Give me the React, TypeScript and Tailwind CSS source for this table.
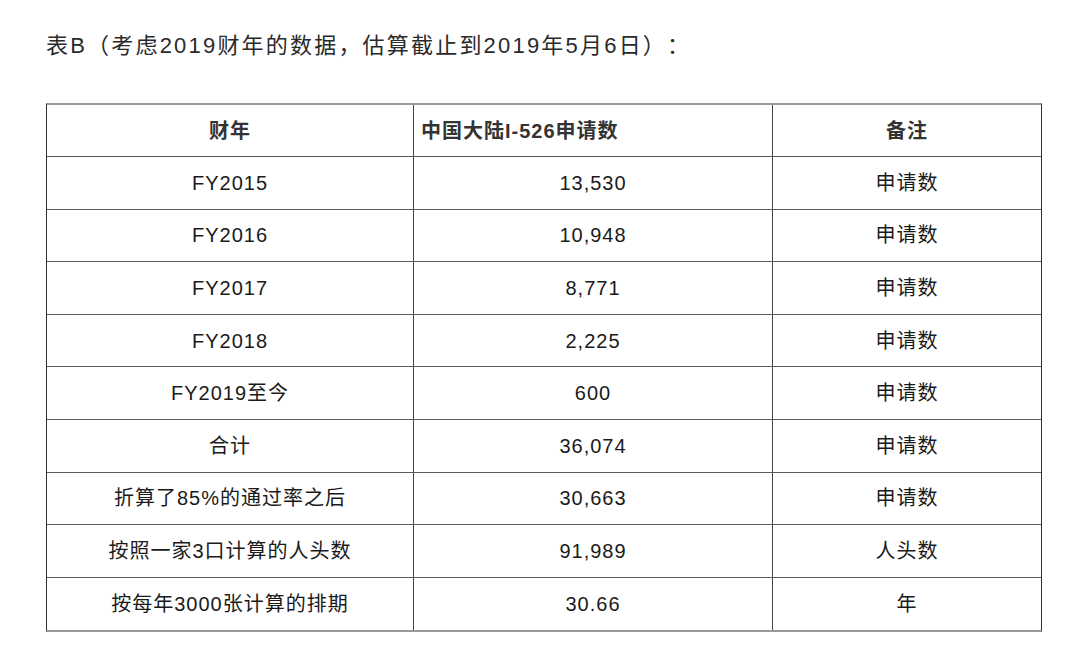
import React from "react";

const rows: [string, string, string][] = [
  ["FY2015", "13,530", "申请数"],
  ["FY2016", "10,948", "申请数"],
  ["FY2017", "8,771", "申请数"],
  ["FY2018", "2,225", "申请数"],
  ["FY2019至今", "600", "申请数"],
  ["合计", "36,074", "申请数"],
  ["折算了85%的通过率之后", "30,663", "申请数"],
  ["按照一家3口计算的人头数", "91,989", "人头数"],
  ["按每年3000张计算的排期", "30.66", "年"],
];

export default function App() {
  return (
    <div
      className="w-[1080px] h-[662px] bg-white overflow-hidden [text-spacing-trim:space-all]"
      style={{ fontFamily: '"Liberation Sans", "Noto Sans CJK SC", sans-serif' }}
    >
      <div className="pt-[31px] pl-[46px] text-[22px] leading-[30px] tracking-[2.2px] text-[#2a2a2a]">
        表B（考虑2019财年的数据，估算截止到2019年5月6日）：
      </div>
      <div className="mt-[42px] ml-[46px] w-[996px] border-t-2 border-b-2 border-t-[#9a9a9a] border-b-[#9a9a9a] border-l border-r border-l-[#333333] border-r-[#333333]">
        <div className="grid grid-cols-[367px_359px_268px] h-[52px] border-b border-[#555555]">
          <div className="flex items-center justify-center text-[20px] font-bold tracking-[1px] text-[#333333] border-r border-[#444444]">
            财年
          </div>
          <div className="flex items-center justify-start pl-[7px] text-[20px] font-bold tracking-[1px] text-[#333333] border-r border-[#444444]">
            中国大陆I-526申请数
          </div>
          <div className="flex items-center justify-center text-[20px] font-bold tracking-[1px] text-[#333333]">
            备注
          </div>
        </div>
        {rows.map((r, i) => (
          <div
            key={i}
            className={
              "grid grid-cols-[367px_359px_268px] h-[52.6px] text-[20px] tracking-[1px] text-[#1a1a1a] " +
              (i < rows.length - 1 ? "border-b border-[#5a5a5a]" : "")
            }
          >
            <div className="flex items-center justify-center border-r border-[#444444]">{r[0]}</div>
            <div className="flex items-center justify-center border-r border-[#444444]">{r[1]}</div>
            <div className="flex items-center justify-center">{r[2]}</div>
          </div>
        ))}
      </div>
    </div>
  );
}
